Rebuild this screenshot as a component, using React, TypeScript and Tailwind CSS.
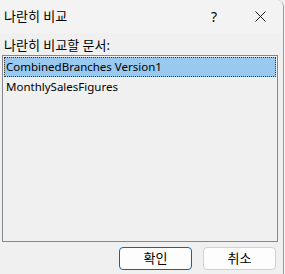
import React from 'react'

const items = ['CombinedBranches Version1', 'MonthlySalesFigures']

export default function App() {
  const font = { fontFamily: '"Noto Sans", "Noto Sans CJK KR", sans-serif' }
  return (
    <div className="w-[285px] h-[274px] bg-[#f0f0f0] overflow-hidden" style={font}>
      <div className="w-[284px] h-[274px] flex flex-col bg-[#f0f0f0] border-r border-[#9c9c9c] rounded-tr-[7px] overflow-hidden">
        {/* title bar */}
        <div className="h-[33px] flex items-center bg-[#f3f3f3] text-[13px] text-black">
          <span className="pl-[4px] flex-1 leading-none">나란히 비교</span>
          <span className="w-[46px] text-center text-[14px] leading-none">?</span>
          <span className="w-[46px] flex justify-center">
            <svg width="11" height="11" viewBox="0 0 11 11">
              <path d="M0.5 0.5 L10.5 10.5 M10.5 0.5 L0.5 10.5" stroke="#1a1a1a" strokeWidth="1" />
            </svg>
          </span>
        </div>

        <div className="flex flex-col px-[2px] pt-[4px]">
          <p className="pl-[2px] text-[13px] leading-[17px] text-black">나란히 비교할 문서:</p>
          <div className="mt-[1px] h-[187px] w-[276px] border border-[#828790] bg-[#f0f0f0] p-[1px]">
            {items.map((it, i) => (
              <div
                key={it}
                className={`h-[20px] flex items-center pl-[1px] text-[11.5px] text-black ${
                  i === 0 ? 'bg-[#99c9ef] border border-dotted border-[#333]' : 'border border-transparent'
                }`}
              >
                {it}
              </div>
            ))}
          </div>

          <div className="flex justify-end gap-[11px] mt-[5px] pr-[5px]">
            <button className="w-[73px] h-[23px] rounded-[4px] border border-[#0067c0] bg-[#fdfdfd] text-[13px] text-black">
              확인
            </button>
            <button className="w-[73px] h-[23px] rounded-[4px] border border-[#d0d0d0] bg-[#fdfdfd] text-[13px] text-black">
              취소
            </button>
          </div>
        </div>
      </div>
    </div>
  )
}
